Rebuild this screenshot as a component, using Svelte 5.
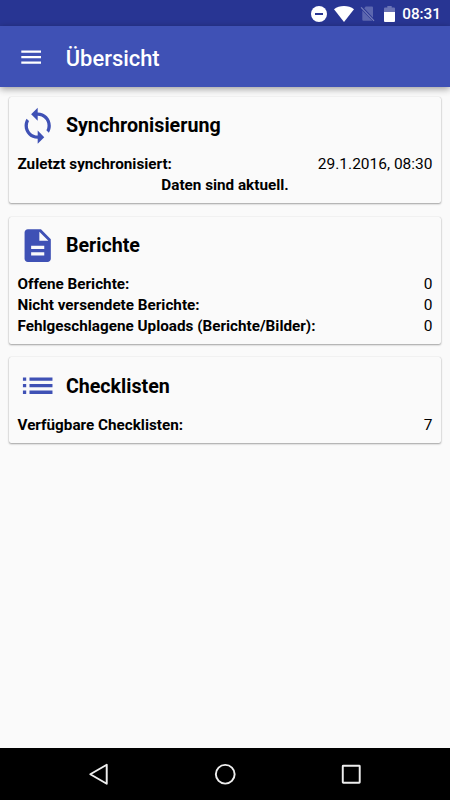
<script>
	const icons = {
		sync: 'M12 4V1L8 5l4 4V6c3.31 0 6 2.69 6 6 0 1.01-.25 1.97-.7 2.8l1.46 1.46C19.54 15.03 20 13.57 20 12c0-4.42-3.58-8-8-8zm0 14c-3.31 0-6-2.69-6-6 0-1.01.25-1.97.7-2.8L5.24 7.74C4.46 8.97 4 10.43 4 12c0 4.42 3.58 8 8 8v3l4-4-4-4v3z',
		report: 'M14 2H6c-1.1 0-1.99.9-1.99 2L4 20c0 1.1.89 2 1.99 2H18c1.1 0 2-.9 2-2V8l-6-6zm2 16H8v-2h8v2zm0-4H8v-2h8v2zm-3-5V3.5L18.5 9H13z',
		list: 'M3 13h2v-2H3v2zm0 4h2v-2H3v2zm0-8h2V7H3v2zm4 4h14v-2H7v2zm0 4h14v-2H7v2zM7 7v2h14V7H7z'
	};

	const cards = [
		{
			title: 'Synchronisierung',
			icon: icons.sync,
			rows: [{ label: 'Zuletzt synchronisiert:', value: '29.1.2016, 08:30' }],
			status: 'Daten sind aktuell.'
		},
		{
			title: 'Berichte',
			icon: icons.report,
			rows: [
				{ label: 'Offene Berichte:', value: 0 },
				{ label: 'Nicht versendete Berichte:', value: 0 },
				{ label: 'Fehlgeschlagene Uploads (Berichte/Bilder):', value: 0 }
			]
		},
		{
			title: 'Checklisten',
			icon: icons.list,
			rows: [{ label: 'Verfügbare Checklisten:', value: 7 }]
		}
	];
</script>

<div class="screen">
	<div class="statusbar">
		<svg class="dnd" viewBox="0 0 16 16">
			<circle cx="8" cy="8" r="8" fill="#fff" />
			<path d="M4 7h8v2H4z" fill="#283593" />
		</svg>
		<svg class="wifi" viewBox="0 0 20 16">
			<path d="M10 16 0 3.2C2.8 1.1 6.2 0 10 0s7.2 1.1 10 3.2z" fill="#fff" />
		</svg>
		<svg class="sim" viewBox="0 0 14 16">
			<path d="M5.2.5h6.3q1 0 1 1v10.2L3.7 2.2zM1.8 4.5 11.8 14.7h-9q-1 0-1-1z" fill="#5c67af" />
			<path d="M.6 1.4 13.5 14.8" stroke="#7880bb" stroke-width="1.2" />
		</svg>
		<svg class="battery" viewBox="0 0 11 16">
			<path d="M3.3 0h4.4v1.6H10q1 0 1 1V6H0V2.6q0-1 1-1h2.3z" fill="#6b74b5" />
			<path d="M0 6h11v9q0 1-1 1H1q-1 0-1-1z" fill="#fff" />
		</svg>
		<span class="clock">08:31</span>
	</div>

	<header class="toolbar">
		<button type="button" class="menu" aria-label="Menü">
			<svg viewBox="0 0 24 24">
				<path d="M3 18h18v-2H3v2zm0-5h18v-2H3v2zm0-7v2h18V6H3z" fill="#fff" />
			</svg>
		</button>
		<h1>Übersicht</h1>
	</header>

	<main>
		{#each cards as card}
			<section class="card">
				<div class="heading">
					<svg viewBox="0 0 24 24"><path d={card.icon} /></svg>
					<h2>{card.title}</h2>
				</div>
				{#each card.rows as row}
					<div class="row">
						<span class="label">{row.label}</span>
						<span class="value">{row.value}</span>
					</div>
				{/each}
				{#if card.status}
					<div class="row centered label">{card.status}</div>
				{/if}
			</section>
		{/each}
	</main>

	<nav>
		<svg viewBox="0 0 24 24"><path d="M20.3 2.7v18.6L4.2 12z" /></svg>
		<svg viewBox="0 0 24 24"><circle cx="12" cy="12" r="9.2" /></svg>
		<svg viewBox="0 0 24 24"><rect x="3.7" y="3.7" width="16.6" height="16.6" rx=".5" /></svg>
	</nav>
</div>

<style>
	:global(body) {
		background: #fafafa;
	}

	.screen {
		display: flex;
		flex-direction: column;
		height: 100vh;
		font-family: Roboto, sans-serif;
		color: #000;
		background: #fafafa;
	}

	svg {
		display: block;
		flex: none;
	}

	.statusbar {
		display: flex;
		align-items: center;
		justify-content: flex-end;
		box-sizing: border-box;
		height: 26px;
		padding: 1px 9px 0 0;
		background: #283593;
		color: #fff;
	}

	.dnd {
		width: 16px;
		height: 16px;
		margin-right: 7px;
	}

	.wifi {
		width: 20px;
		height: 16px;
		margin-right: 6px;
	}

	.sim {
		width: 15px;
		height: 16px;
		margin-right: 9px;
	}

	.battery {
		width: 11px;
		height: 16px;
		margin-right: 7px;
	}

	.clock {
		padding-top: 2px;
		font-size: 15.3px;
		font-weight: 500;
		line-height: 23px;
	}

	.toolbar {
		display: flex;
		align-items: center;
		z-index: 1;
		box-sizing: border-box;
		height: 61px;
		padding: 2px 17.5px 0;
		background: #3f51b5;
		color: #fff;
		box-shadow: 0 2px 7px rgba(0, 0, 0, 0.38);
	}

	.menu {
		border: none;
		padding: 0;
		margin-right: 22px;
		background: none;
	}

	.menu svg {
		width: 26.3px;
		height: 26.3px;
	}

	h1 {
		margin: 0;
		padding-top: 2px;
		font-size: 21.9px;
		font-weight: 500;
		line-height: 26px;
	}

	main {
		flex: 1;
		display: flex;
		flex-direction: column;
		gap: 13.2px;
		padding: 9.5px 8.75px;
	}

	.card {
		padding: 9px 8.75px 7.9px;
		border-radius: 2px;
		background: #fafafa;
		box-shadow: 0 1px 2px rgba(0, 0, 0, 0.35), 0 0 1px rgba(0, 0, 0, 0.2);
	}

	.heading {
		display: flex;
		align-items: center;
		gap: 9px;
		margin-bottom: 9.4px;
	}

	.heading svg {
		width: 39.4px;
		height: 39.4px;
		fill: #3f51b5;
	}

	h2 {
		margin: 0;
		padding-top: 1.7px;
		font-size: 19.65px;
		font-weight: 700;
		line-height: 24px;
	}

	.row {
		display: flex;
		justify-content: space-between;
		font-size: 15.3px;
		line-height: 20.6px;
	}

	.centered {
		justify-content: center;
	}

	.label {
		font-weight: 700;
		font-size: 15.25px;
	}

	.value {
		font-size: 15.5px;
	}

	nav {
		display: flex;
		align-items: center;
		justify-content: center;
		gap: 102px;
		height: 52px;
		background: #000;
	}

	nav svg {
		width: 24.5px;
		height: 24.5px;
		fill: none;
		stroke: #eee;
		stroke-width: 1.9;
		stroke-linejoin: round;
	}
</style>
